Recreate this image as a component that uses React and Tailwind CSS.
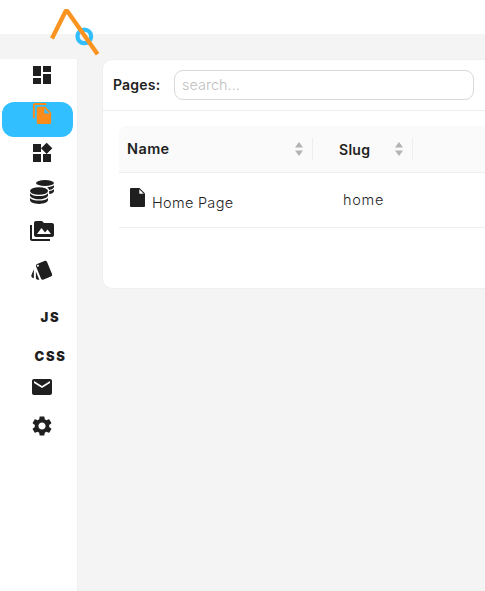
import { MdDashboard, MdFileCopy, MdWidgets, MdPermMedia, MdStyle, MdEmail, MdSettings } from "react-icons/md";

function Coins() {
  return (
    <svg viewBox="0 0 24 24" className="h-6 w-6" fill="currentColor">
      <ellipse cx="15" cy="3" rx="9" ry="3" />
      <path d="M17 7.200c3-.1 5.700-.8 7-1.900v1.500c0 1.400-2 2.700-4.800 3.100-.2-1.100-1-2.100-2.200-2.700ZM19.200 11.100c2-.3 3.800-.9 4.800-1.800v1.600c0 1.500-2 2.800-4.800 3.200Z" />
      <ellipse cx="9" cy="11" rx="9" ry="3.800" />
      <path d="M0 13.200c1.500 1.900 5 2.900 9 2.900s7.500-1 9-2.900v2c0 2.300-4 4-9 4s-9-1.700-9-4ZM0 17.900c1.500 1.800 5 2.700 9 2.700s7.500-.9 9-2.700v2.200c0 2.300-4 3.900-9 3.900s-9-1.600-9-3.900Z" />
    </svg>
  );
}

function PageIcon() {
  return (
    <svg viewBox="0 0 15 19" className="h-[19px] w-[15px]">
      <path d="M1 0h8.500L15 5.500V18a1 1 0 0 1-1 1H1a1 1 0 0 1-1-1V1a1 1 0 0 1 1-1Z" fill="#1f1f1f" />
      <path d="M9.300 1.300v4.400h4.400Z" fill="#ffffff" />
    </svg>
  );
}

function NavItem({ active, children }) {
  return (
    <div className={`ml-0.5 flex h-[35px] w-[71px] shrink-0 justify-center rounded-xl pl-[9px] ${active ? "bg-[#31bfff] text-[#fa8c1c]" : "text-[#1f1f1f]"}`}>
      {children}
    </div>
  );
}

function Sorter() {
  return (
    <svg viewBox="0 0 8 14" className="h-3.5 w-2 fill-[#b3b3b3]">
      <path d="M4 0 8 5.500H0ZM0 8.500h8L4 14Z" />
    </svg>
  );
}

export default function App() {
  return (
    <div className="relative flex h-[591px] w-[485px] flex-col overflow-hidden bg-[#f4f4f4] font-['Inter',sans-serif] text-[#1f1f1f]">
      <header className="h-[34px] shrink-0 bg-white">
        <svg viewBox="0 0 52 48" className="absolute left-[49px] top-[8px] h-12 w-[52px]" fill="none">
          <circle cx="35.300" cy="28.400" r="6.800" stroke="#31bfff" strokeWidth="4.200" />
          <path d="M3 30.500 16.600 3.200h1.800L48.600 46.300" stroke="#fa9420" strokeWidth="4.300" strokeLinejoin="round" />
        </svg>
      </header>
      <div className="flex min-h-0 flex-1">
        <nav className="mt-[25px] flex w-[78px] shrink-0 flex-col gap-1 border-r border-[#efefef] bg-white pt-1">
          <NavItem><MdDashboard size={24} /></NavItem>
          <NavItem active><MdFileCopy size={23} /></NavItem>
          <NavItem><MdWidgets size={24} /></NavItem>
          <NavItem><Coins /></NavItem>
          <NavItem><MdPermMedia size={24} /></NavItem>
          <NavItem><MdStyle size={24} /></NavItem>
          <NavItem>
            <span className="ml-[17px] mt-[13px] text-[13px] font-black leading-[15px] tracking-[1.800px]">JS</span>
          </NavItem>
          <NavItem>
            <span className="ml-[17px] mt-[13px] text-[13px] font-black leading-[15px] tracking-[1.600px]">CSS</span>
          </NavItem>
          <NavItem><MdEmail size={24} /></NavItem>
          <NavItem><MdSettings size={24} /></NavItem>
        </nav>
        <main className="min-w-0 flex-1 pl-[24px] pt-[25px]">
          <section className="h-[230px] rounded-l-[10px] border-y border-l border-[#efefef] bg-white">
            <div className="flex h-[51px] items-center border-b border-[#eeeeee] pl-[10px]">
              <label className="w-[61px] whitespace-nowrap pb-0.5 text-[14px] font-semibold tracking-[0.200px]">Pages:</label>
              <input placeholder="search..." className="h-[30px] w-[300px] rounded-[9px] border border-[#d9d9d9] bg-white px-[7px] pb-0.5 text-[14.500px] font-light outline-none placeholder:text-[#bfbfbf]" />
            </div>
            <div className="ml-4 mt-[15px]">
              <div className="flex h-[47px] items-center rounded-tl-lg border-b border-[#eeeeee] bg-[#fafafa] text-[14px] font-semibold">
                <div className="flex h-[22px] w-[194px] items-center justify-between border-r border-[#eeeeee] pl-2 pr-[9px]">
                  <span className="text-[14.500px] tracking-[0.400px]">Name</span>
                  <Sorter />
                </div>
                <div className="flex h-[22px] w-[100px] items-center justify-between border-r border-[#eeeeee] pl-[26px] pr-[9px]">
                  <span className="tracking-[0.300px]">Slug</span>
                  <Sorter />
                </div>
              </div>
              <div className="flex h-[55px] items-center border-b border-[#eeeeee] text-[14.500px] font-light">
                <div className="flex w-[224px] items-center pl-[11px]">
                  <span className="-mt-[5px]"><PageIcon /></span>
                  <span className="ml-[7px] mt-[6px] tracking-[0.300px]">Home Page</span>
                </div>
                <span className="tracking-[0.700px]">home</span>
              </div>
            </div>
          </section>
        </main>
      </div>
    </div>
  );
}
